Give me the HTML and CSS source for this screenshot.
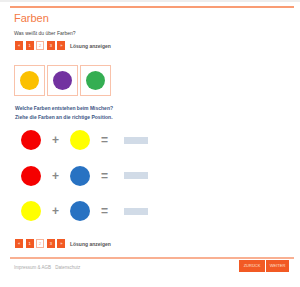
FILE: index.html
```html
<!DOCTYPE html>
<html lang="de">
<head>
    <meta charset="UTF-8">
    <title>Farben</title>
    <link rel="stylesheet" href="styles.css">
</head>
<body>
    <div class="topbar"></div>
    <div class="page">
        <h1 class="title">Farben</h1>
        <p class="intro">Was weißt du über Farben?</p>

        <div class="pager">
            <a class="pg">«</a>
            <a class="pg">1</a>
            <a class="pg active">2</a>
            <a class="pg">3</a>
            <a class="pg">»</a>
            <span class="solution">Lösung anzeigen</span>
        </div>

        <!-- Farben zum Ziehen -->
        <div class="palette">
            <div class="swatch"><span class="dot yellow-dark"></span></div>
            <div class="swatch"><span class="dot purple"></span></div>
            <div class="swatch"><span class="dot green"></span></div>
        </div>

        <p class="task">Welche Farben entstehen beim Mischen?</p>
        <p class="task">Ziehe die Farben an die richtige Position.</p>

        <div class="mix">
            <div class="row">
                <span class="ball red"></span>
                <span class="op">+</span>
                <span class="ball yellow"></span>
                <span class="op">=</span>
                <span class="slot"></span>
            </div>
            <div class="row">
                <span class="ball red"></span>
                <span class="op">+</span>
                <span class="ball blue"></span>
                <span class="op">=</span>
                <span class="slot"></span>
            </div>
            <div class="row">
                <span class="ball yellow"></span>
                <span class="op">+</span>
                <span class="ball blue"></span>
                <span class="op">=</span>
                <span class="slot"></span>
            </div>
        </div>

        <div class="pager bottom">
            <a class="pg">«</a>
            <a class="pg">1</a>
            <a class="pg active">2</a>
            <a class="pg">3</a>
            <a class="pg">»</a>
            <span class="solution">Lösung anzeigen</span>
        </div>

        <div class="footer">
            <div class="links">
                <a>Impressum &amp; AGB</a>
                <a>Datenschutz</a>
            </div>
            <div class="nav">
                <a class="btn">ZURÜCK</a>
                <a class="btn">WEITER</a>
            </div>
        </div>
    </div>
</body>
</html>
```

FILE: styles.css
```css
* {
    margin: 0;
    padding: 0;
    box-sizing: border-box;
}

body {
    background: #fff;
    font-family: "Liberation Sans", Arial, sans-serif;
    color: #333;
}

.topbar {
    height: 2px;
    background: #eee;
}

.page {
    margin: 4px 6px 0 10px;
    border-top: 2px solid #f99c74;
}

/* Kopf */
.title {
    margin: 4px 0 0 4px;
    font-size: 11px;
    font-weight: normal;
    line-height: 12px;
    color: #f47a45;
}

.intro {
    margin: 6px 0 0 4px;
    font-size: 5px;
    line-height: 6px;
    color: #444;
}

/* Seitennavigation */
.pager {
    display: flex;
    align-items: center;
    margin: 5px 0 0 5px;
    height: 9px;
}

.pg {
    width: 8px;
    height: 9px;
    margin-right: 2.6px;
    background: #f25a24;
    color: #fff;
    font-size: 4px;
    line-height: 9px;
    text-align: center;
}

.pg.active {
    background: #fff;
    border: 1px solid #f9b49a;
    color: #f9a07c;
    line-height: 7px;
}

.solution {
    margin-left: 2px;
    font-size: 5px;
    font-weight: bold;
    color: #555;
}

.pager.bottom {
    margin-top: 18px;
}

/* Farbkaesten */
.palette {
    display: flex;
    gap: 2px;
    margin: 15px 0 0 4px;
}

.swatch {
    width: 31px;
    height: 31px;
    border: 1px solid #f9c2aa;
    display: flex;
    align-items: center;
    justify-content: center;
}

.dot {
    width: 19px;
    height: 19px;
    border-radius: 50%;
}

.yellow-dark { background: #fbc000; }
.purple { background: #7232a0; }
.green { background: #34ae52; }

.task {
    margin-left: 5px;
    font-size: 5px;
    line-height: 9px;
    font-weight: bold;
    color: #3c5684;
}

.palette + .task {
    margin-top: 8px;
}

/* Mischreihen */
.mix {
    margin: 8px 0 0 11px;
}

.row {
    display: flex;
    align-items: center;
    height: 20px;
    margin-bottom: 15.5px;
}

.ball {
    width: 20px;
    height: 20px;
    border-radius: 50%;
}

.red { background: #f50000; }
.yellow { background: #ffff00; }
.blue { background: #2872c2; }

.op {
    width: 29px;
    text-align: center;
    font-size: 12px;
    font-weight: bold;
    color: #888;
}

.slot {
    width: 24px;
    height: 7px;
    margin-left: 5px;
    background: #d1dbe7;
}

.mix .row:last-child {
    margin-bottom: 0;
}

/* Fuss */
.footer {
    display: flex;
    justify-content: space-between;
    align-items: flex-start;
    margin-top: 9px;
    border-top: 2px solid #f9b092;
    padding: 1px 5px 0 4px;
}

.links {
    padding-top: 5px;
    font-size: 4.5px;
    color: #aaa;
}

.links a {
    margin-right: 3px;
}

.nav {
    display: flex;
    gap: 1px;
}

.btn {
    width: 26px;
    height: 12px;
    background: #f25a24;
    color: #fde0d4;
    font-size: 4px;
    line-height: 12px;
    text-align: center;
}

.btn + .btn {
    width: 23px;
}
```
